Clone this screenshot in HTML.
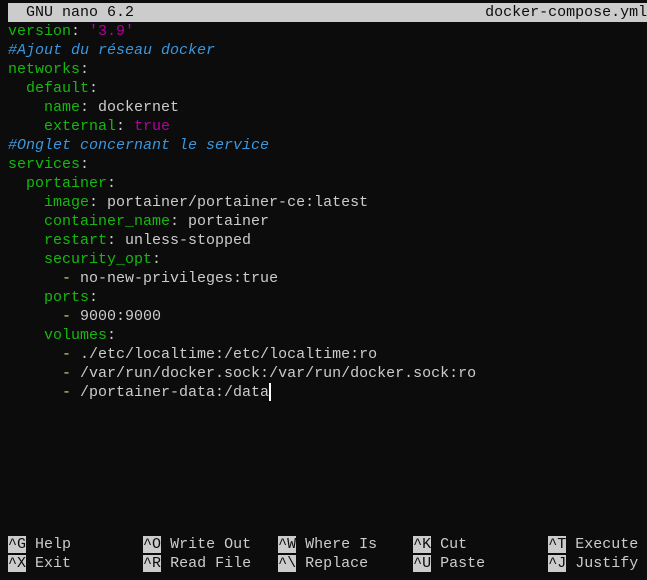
<!DOCTYPE html>
<html><head><meta charset="utf-8"><style>
html,body{margin:0;padding:0;background:#0c0c0c;width:647px;height:580px;overflow:hidden}
.r{position:absolute;left:8px;height:19px;line-height:19px;white-space:pre;font-family:"Liberation Mono","DejaVu Sans Mono",monospace;font-size:15px;color:#cccccc}
.g{color:#16b80e}
.c{color:#3a96dd;font-style:italic}
.m{color:#b4009e}
.y{color:#d8cf8c}
.hdr{left:8px;top:3px;width:639px;background:#cccccc;color:#0c0c0c}
.k{background:#cccccc;color:#0c0c0c}
.cur{display:inline-block;width:2px;height:18px;background:#ffffff;vertical-align:top}
</style></head><body>
<div class="r hdr">  GNU nano 6.2                                       docker-compose.yml</div>
<div class="r" style="top:22px"><span class="g">version</span>: <span class="m">'3.9'</span></div>
<div class="r" style="top:41px"><span class="c">#Ajout du réseau docker</span></div>
<div class="r" style="top:60px"><span class="g">networks</span>:</div>
<div class="r" style="top:79px">  <span class="g">default</span>:</div>
<div class="r" style="top:98px">    <span class="g">name</span>: dockernet</div>
<div class="r" style="top:117px">    <span class="g">external</span>: <span class="m">true</span></div>
<div class="r" style="top:136px"><span class="c">#Onglet concernant le service</span></div>
<div class="r" style="top:155px"><span class="g">services</span>:</div>
<div class="r" style="top:174px">  <span class="g">portainer</span>:</div>
<div class="r" style="top:193px">    <span class="g">image</span>: portainer/portainer-ce:latest</div>
<div class="r" style="top:212px">    <span class="g">container_name</span>: portainer</div>
<div class="r" style="top:231px">    <span class="g">restart</span>: unless-stopped</div>
<div class="r" style="top:250px">    <span class="g">security_opt</span>:</div>
<div class="r" style="top:269px">      <span class="y">-</span> no-new-privileges:true</div>
<div class="r" style="top:288px">    <span class="g">ports</span>:</div>
<div class="r" style="top:307px">      <span class="y">-</span> 9000:9000</div>
<div class="r" style="top:326px">    <span class="g">volumes</span>:</div>
<div class="r" style="top:345px">      <span class="y">-</span> ./etc/localtime:/etc/localtime:ro</div>
<div class="r" style="top:364px">      <span class="y">-</span> /var/run/docker.sock:/var/run/docker.sock:ro</div>
<div class="r" style="top:383px">      <span class="y">-</span> /portainer-data:/data<span class="cur"></span></div>
<div class="r" style="top:535px"><span class="k">^G</span> Help        <span class="k">^O</span> Write Out   <span class="k">^W</span> Where Is    <span class="k">^K</span> Cut         <span class="k">^T</span> Execute</div>
<div class="r" style="top:554px"><span class="k">^X</span> Exit        <span class="k">^R</span> Read File   <span class="k">^\</span> Replace     <span class="k">^U</span> Paste       <span class="k">^J</span> Justify</div>
</body></html>
